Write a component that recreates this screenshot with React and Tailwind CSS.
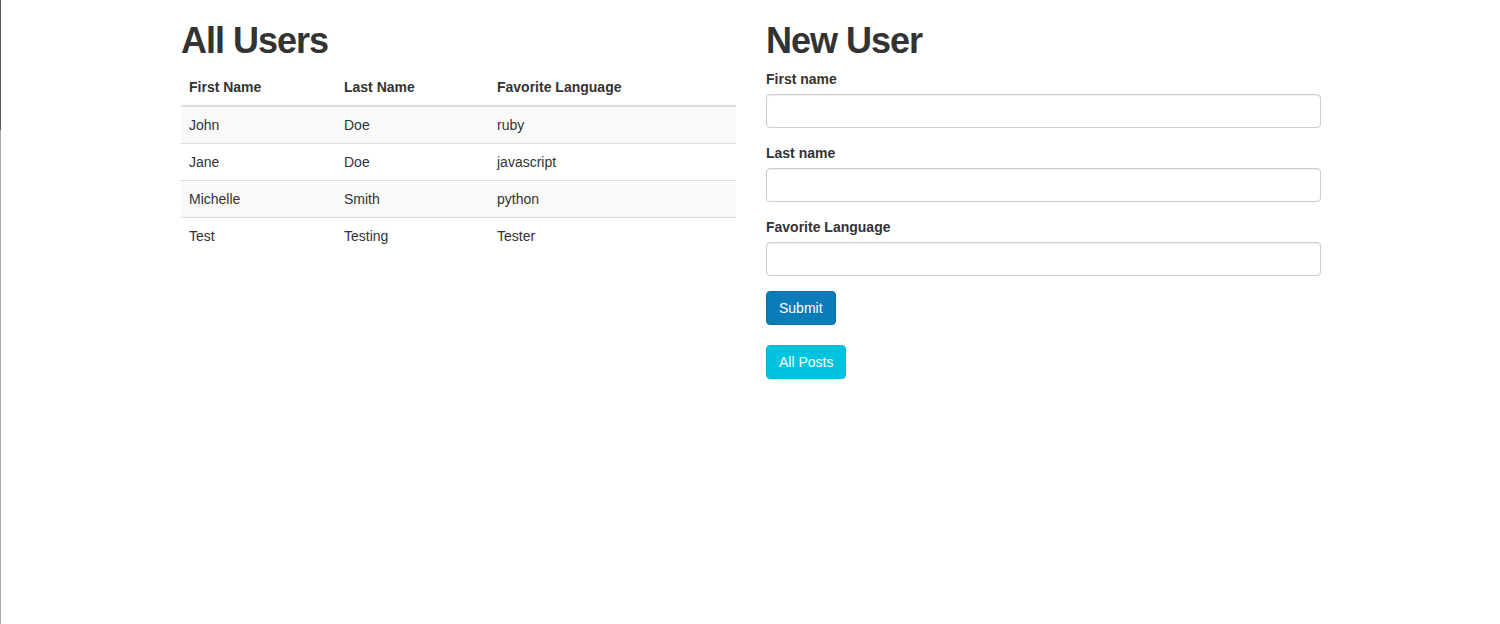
import React from "react";

const users = [
  ["John", "Doe", "ruby"],
  ["Jane", "Doe", "javascript"],
  ["Michelle", "Smith", "python"],
  ["Test", "Testing", "Tester"],
];

function Field({ label }) {
  return (
    <div className="mb-[15px]">
      <label className="inline-block mb-[5px] font-bold leading-[20px]">{label}</label>
      <input
        type="text"
        className="block w-full h-[34px] px-3 py-[6px] border border-[#cccccc] rounded-[4px] bg-white shadow-[inset_0_1px_1px_rgba(0,0,0,0.075)] outline-none"
      />
    </div>
  );
}

export default function App() {
  return (
    <div
      className="relative min-h-[624px] bg-white text-[#333333] text-[14px] leading-[20px]"
      style={{ fontFamily: '"Liberation Sans", Helvetica, Arial, sans-serif' }}
    >
      <div className="absolute left-0 top-0 bottom-0 w-px flex flex-col">
        <div className="h-[130px] bg-[#5a5a5a]" />
        <div className="flex-1 bg-[#a8a8a8]" />
      </div>
      <div className="w-[1170px] mx-auto pl-[16px] pr-[14px]">
        <div className="flex -mx-[15px]">
          <div className="w-1/2 px-[15px]">
            <h1 className="mt-[21px] mb-[8px] text-[36px] leading-[1.1] font-bold tracking-[-1px]">All Users</h1>
            <table className="w-full border-collapse mb-5">
              <thead>
                <tr>
                  <th className="w-[155px] text-left font-bold p-2 border-b-2 border-[#dddddd]">First Name</th>
                  <th className="w-[153px] text-left font-bold p-2 border-b-2 border-[#dddddd]">Last Name</th>
                  <th className="text-left font-bold p-2 border-b-2 border-[#dddddd]">Favorite Language</th>
                </tr>
              </thead>
              <tbody>
                {users.map((u, i) => (
                  <tr key={i} className={i % 2 === 0 ? "bg-[#f9f9f9]" : ""}>
                    {u.map((c, j) => (
                      <td key={j} className="p-2 border-t border-[#dddddd]">{c}</td>
                    ))}
                  </tr>
                ))}
              </tbody>
            </table>
          </div>
          <div className="w-1/2 px-[15px]">
            <h1 className="mt-[21px] mb-[8px] text-[36px] leading-[1.1] font-bold tracking-[-1px]">New User</h1>
            <form>
              <Field label="First name" />
              <Field label="Last name" />
              <Field label="Favorite Language" />
              <button
                type="button"
                className="block h-[34px] px-3 py-[6px] rounded-[4px] bg-[#0a7cb7] border border-[#086fa3] text-white leading-[20px]"
              >
                Submit
              </button>
            </form>
            <button
              type="button"
              className="block mt-[20px] h-[34px] px-3 py-[6px] rounded-[4px] bg-[#00c3e0] border border-[#00b8d4] text-white leading-[20px]"
            >
              All Posts
            </button>
          </div>
        </div>
      </div>
    </div>
  );
}
